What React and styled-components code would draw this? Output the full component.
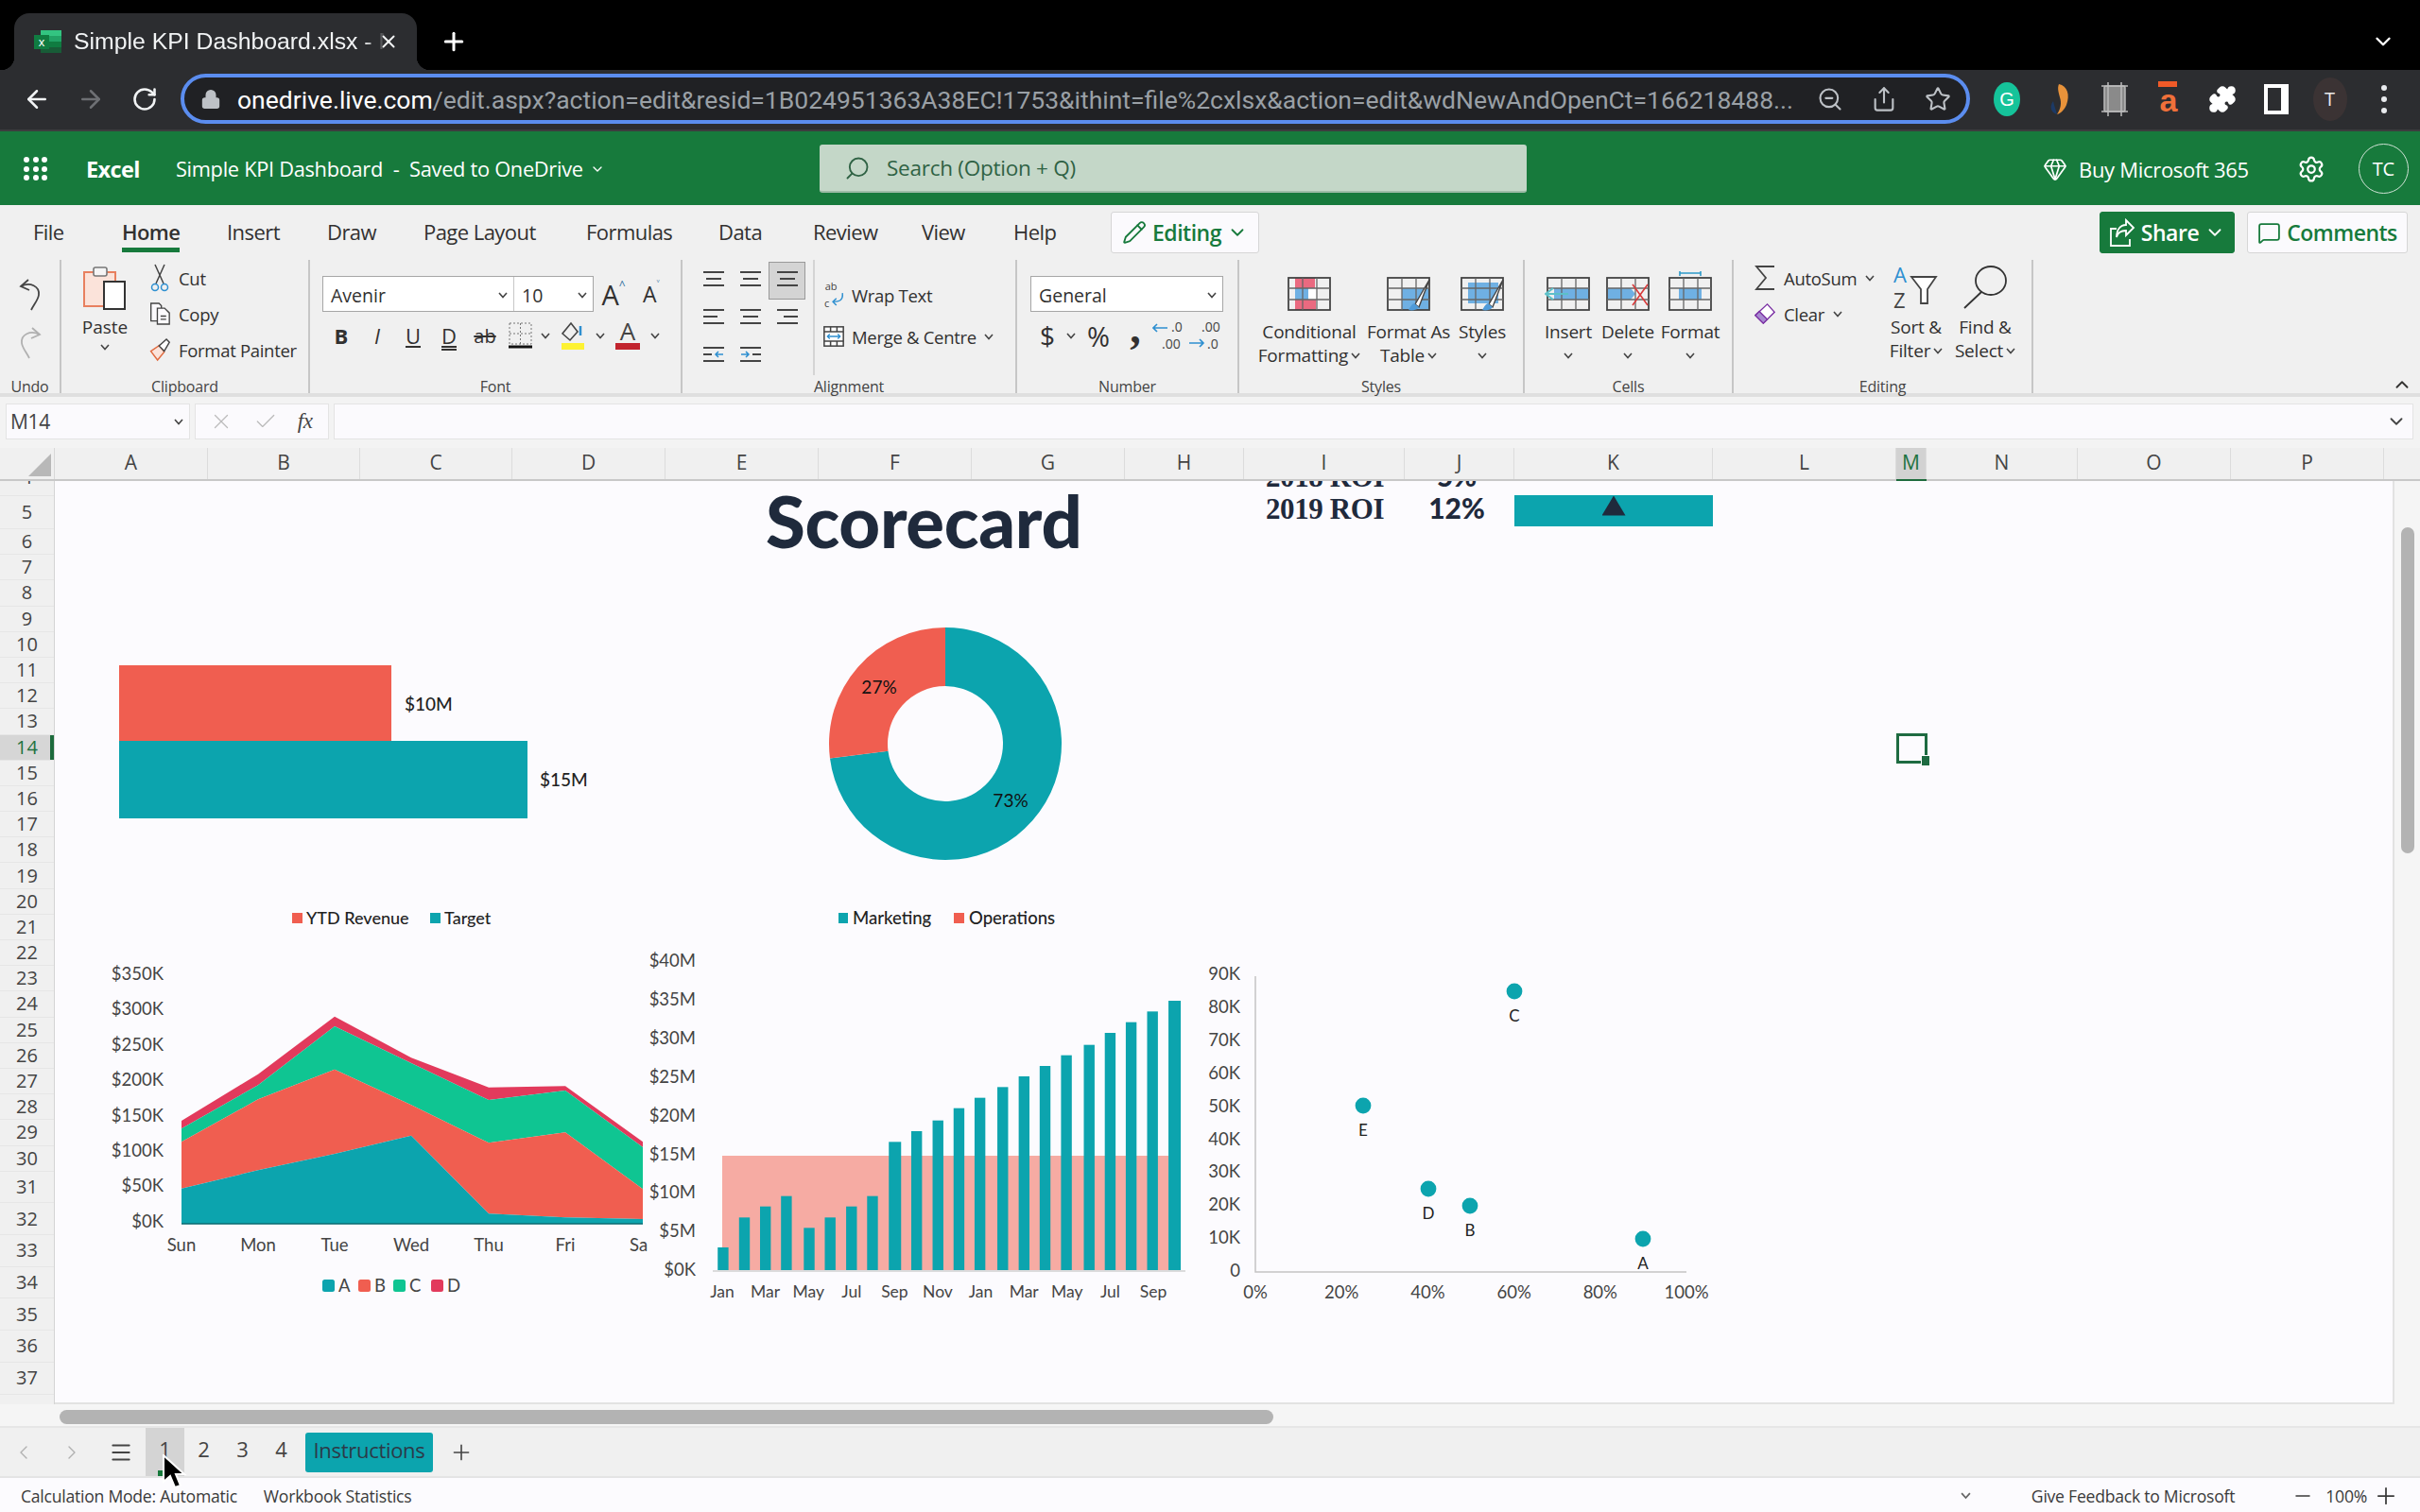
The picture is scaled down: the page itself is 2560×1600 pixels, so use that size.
import React from 'react';
import styled, { createGlobalStyle } from 'styled-components';
import { ArrowLeft, ArrowRight, RotateCw, Lock, Plus, X, ChevronDown, ChevronUp, ChevronLeft, ChevronRight, Search, ZoomOut, Share, Star, Puzzle, Gem, Settings, Pencil, Menu, Minus, MessageSquare, Check } from 'lucide-react';

const TEAL = '#0ca4ae';
const CORAL = '#f05e50';
const GREEN = '#177a3c';
const UI_FONT = '"Open Sans", "Noto Sans", sans-serif';
const CHART_FONT = 'Lato, "Open Sans", sans-serif';

const GlobalStyle = createGlobalStyle`
    html, body { margin: 0; padding: 0; background: #f0f0f0; }
    * { box-sizing: border-box; }
`;

const Page = styled.div`
    position: relative;
    width: 2560px;
    height: 1600px;
    overflow: hidden;
    display: flex;
    flex-direction: column;
    font-family: ${UI_FONT};
    color: #323130;
`;

/* browser chrome */
const TabStrip = styled.div`
    height: 74px;
    background: #000;
    display: flex;
    align-items: flex-end;
    padding-left: 15px;
`;
const BrowserTab = styled.div`
    position: relative;
    width: 426px;
    height: 60px;
    background: #2c2d30;
    border-radius: 16px 16px 0 0;
    display: flex;
    align-items: center;
    padding: 0 0 0 21px;
    color: #f1f3f4;
    &::before, &::after {
        content: '';
        position: absolute;
        bottom: 0;
        width: 14px;
        height: 14px;
    }
    &::before { left: -14px; background: radial-gradient(circle at 0 0, #000 14px, #2c2d30 14.5px); }
    &::after { right: -14px; background: radial-gradient(circle at 100% 0, #000 14px, #2c2d30 14.5px); }
`;
const TabTitle = styled.span`
    font-family: "Liberation Sans", sans-serif;
    font-size: 24.8px;
    width: 334px;
    margin-left: 13px;
    white-space: nowrap;
    overflow: hidden;
    -webkit-mask-image: linear-gradient(90deg, #000 92%, transparent 99%);
`;
const TabClose = styled(X)`
    margin-left: -12px;
    color: #f1f3f4;
`;
const NewTab = styled(Plus)`
    color: #fff;
    margin: 0 0 15px 24px;
`;
const TabListChevron = styled(ChevronDown)`
    color: #fff;
    margin: 0 26px 17px auto;
`;
const Toolbar = styled.div`
    height: 65px;
    background: #2c2d30;
    display: flex;
    align-items: center;
    padding: 0 0 2px 10px;
    border-bottom: 2px solid #3c3c3e;
`;
const NavButton = styled.div`
    width: 57px;
    display: flex;
    justify-content: center;
    color: ${p => (p.$off ? '#6e7074' : '#f1f3f4')};
`;
const UrlBar = styled.div`
    width: 1893px;
    height: 53px;
    margin: 0 10px;
    border: 4px solid #5b8def;
    border-radius: 27px;
    background: #202124;
    display: flex;
    align-items: center;
    padding: 0 2px 0 17px;
    color: #bdc1c6;
`;
const UrlText = styled.div`
    font-family: Roboto, "Liberation Sans", sans-serif;
    font-size: 26.5px;
    color: #9aa0a6;
    margin-left: 17px;
    flex: none;
    width: 1656px;
    padding-top: 2px;
    white-space: nowrap;
    overflow: hidden;
    b { color: #fff; font-weight: 400; }
`;
const UrlAction = styled.div`
    width: 57px;
    flex: none;
    display: flex;
    justify-content: center;
`;
const ExtButton = styled.div`
    width: 57px;
    height: 50px;
    display: flex;
    align-items: center;
    justify-content: center;
    color: #fff;
`;
const Avatar = styled.div`
    width: 36px;
    height: 46px;
    border-radius: 50%;
    background: #3b3334;
    color: #e8e8e8;
    font-size: 20px;
    display: flex;
    align-items: center;
    justify-content: center;
`;

/* excel title bar */
const AppBar = styled.div`
    height: 78px;
    background: ${GREEN};
    display: grid;
    grid-template-columns: 867px 748px 1fr;
    align-items: center;
    color: #fff;
`;
const AppLeft = styled.div`
    display: flex;
    align-items: center;
    padding: 1px 0 0 25px;
`;
const Waffle = styled.div`
    display: grid;
    grid-template-columns: repeat(3, 6px);
    gap: 3.5px;
    i { width: 6px; height: 6px; border-radius: 50%; background: #fff; }
`;
const AppName = styled.span`
    font-size: 23.5px;
    font-weight: 700;
    margin-left: 41px;
    letter-spacing: -0.6px;
`;
const DocName = styled.span`
    font-size: 21.8px;
    margin-left: 38px;
    display: flex;
    align-items: center;
    gap: 2px;
    white-space: pre;
    letter-spacing: -0.3px;
`;
const SearchBox = styled.div`
    height: 51px;
    background: #c4d7c8;
    border-radius: 3px;
    border-bottom: 2px solid #9dbba6;
    display: flex;
    align-items: center;
    padding: 1px 0 0 26px;
    gap: 17px;
    font-size: 22.5px;
    color: #2f6244;
    letter-spacing: -0.25px;
`;
const AppRight = styled.div`
    display: flex;
    align-items: center;
    padding: 1px 0 0 546px;
    font-size: 22px;
    white-space: nowrap;
    letter-spacing: -0.3px;
`;
const BuyText = styled.span`
    margin-left: 12px;
`;
const GearIcon = styled(Settings)`
    margin-left: 51px;
`;
const UserCircle = styled.div`
    width: 53px;
    height: 53px;
    margin-left: 35px;
    border: 1.5px solid #d0e3d6;
    border-radius: 50%;
    display: flex;
    align-items: center;
    justify-content: center;
    font-size: 20px;
`;

/* ribbon */
const Ribbon = styled.div`
    height: 203px;
    background: #f0f0f0;
    border-bottom: 4px solid #dfdfdf;
`;
const RibbonTabs = styled.div`
    height: 58px;
    display: flex;
    align-items: flex-start;
    gap: 50px;
    padding: 0 13px 0 35px;
`;
const RibbonTab = styled.div`
    width: ${p => p.$w}px;
    height: 50px;
    padding-top: 13px;
    line-height: 30px;
    font-size: 22px;
    letter-spacing: -0.55px;
    white-space: nowrap;
    font-weight: ${p => (p.$active ? 600 : 400)};
    border-bottom: 5px solid ${p => (p.$active ? GREEN : 'transparent')};
`;
const ModeButton = styled.div`
    height: 44px;
    margin-top: 7px;
    margin-left: ${p => p.$left || 0}px;
    width: ${p => p.$w}px;
    border-radius: 3px;
    border: 1.5px solid ${p => (p.$primary ? GREEN : '#d6d6d6')};
    background: ${p => (p.$primary ? GREEN : '#fbfafd')};
    color: ${p => (p.$primary ? '#fff' : GREEN)};
    display: flex;
    align-items: center;
    justify-content: center;
    gap: 6px;
    font-size: 23px;
    font-weight: 600;
    letter-spacing: -0.5px;
`;
const RibbonBody = styled.div`
    display: flex;
    height: 141px;
`;
const Group = styled.section`
    width: ${p => p.$w}px;
    border-right: 2px solid #c6c6c6;
    display: flex;
    flex-direction: column;
`;
const GroupBody = styled.div`
    flex: 1;
    display: flex;
    padding-left: ${p => p.$pad || 0}px;
    min-height: 0;
`;
const GroupLabel = styled.div`
    height: 20px;
    line-height: 20px;
    margin-bottom: -3px;
    text-align: center;
    font-size: 16px;
    letter-spacing: -0.2px;
    color: #444;
`;
const UndoStack = styled.div`
    width: 100%;
    display: flex;
    flex-direction: column;
    align-items: center;
    gap: 15px;
    padding-top: 19px;
`;
const PasteButton = styled.div`
    width: 52px;
    display: flex;
    flex-direction: column;
    align-items: center;
    padding-top: 5px;
    font-size: 19px;
    gap: 5px;
`;
const SmallColumn = styled.div`
    margin-left: ${p => p.$left || 0}px;
    padding-top: ${p => p.$top || 0}px;
    width: ${p => p.$w || 'auto'};
    display: flex;
    flex-direction: column;
`;
const SmallButton = styled.div`
    height: ${p => p.$h || 38}px;
    display: flex;
    align-items: center;
    gap: ${p => p.$gap || 9}px;
    font-size: 18.5px;
    letter-spacing: -0.3px;
    white-space: nowrap;
`;
const IconSlot = styled.span`
    width: 22px;
    display: flex;
    justify-content: center;
`;
const FontColumn = styled.div`
    padding-top: 17px;
`;
const Combo = styled.div`
    height: 38px;
    width: ${p => p.$w}px;
    background: #fff;
    border: 1.5px solid #a6a6a6;
    display: flex;
    align-items: center;
`;
const ComboPart = styled.div`
    height: 100%;
    flex: ${p => (p.$fixed ? `0 0 ${p.$fixed}px` : 1)};
    display: flex;
    align-items: center;
    justify-content: space-between;
    padding: 2px 6px 0 8px;
    font-size: 19.5px;
    ${p => p.$divider && 'border-right: 1.5px solid #c8c8c8;'}
`;
const Row = styled.div`
    display: flex;
    align-items: center;
    margin-top: ${p => p.$top || 0}px;
    margin-left: ${p => p.$left || 0}px;
`;
const ToolGlyph = styled.div`
    width: ${p => p.$w || 38}px;
    height: 36px;
    display: flex;
    align-items: center;
    justify-content: center;
    font-size: ${p => p.$size || 22}px;
    font-weight: ${p => p.$weight || 400};
    font-style: ${p => (p.$italic ? 'italic' : 'normal')};
    text-decoration: ${p => p.$line || 'none'};
    sup { font-size: 12px; align-self: flex-start; color: #2e6f9e; }
`;
const CommaGlyph = styled(ToolGlyph)`
    font-family: "Liberation Serif", serif;
    padding-bottom: 16px;
`;
const AlignGrid = styled.div`
    display: grid;
    grid-template-columns: repeat(3, 39px);
    grid-auto-rows: 40px;
    padding-top: 2px;
`;
const AlignCell = styled.div`
    display: flex;
    align-items: center;
    justify-content: center;
    ${p => p.$on && 'background: #d4d4d4; border: 1.5px solid #999;'}
`;
const InnerDivider = styled.div`
    width: 2px;
    height: 122px;
    background: #d4d4d4;
    margin: 0 9px 0 8px;
`;
const LargeButton = styled.div`
    width: ${p => p.$w}px;
    display: flex;
    flex-direction: column;
    align-items: center;
    padding-top: ${p => p.$top ?? 14}px;
`;
const LargeIcon = styled.div`
    height: ${p => p.$h || 38}px;
    display: flex;
    align-items: center;
    justify-content: center;
`;
const LargeText = styled.div`
    margin-top: ${p => p.$gap ?? 12}px;
    font-size: 19px;
    line-height: 25px;
    text-align: center;
    letter-spacing: -0.2px;
    white-space: nowrap;
    div { display: flex; align-items: center; justify-content: center; gap: 3px; min-height: 25px; }
`;
const CollapseRibbon = styled(ChevronUp)`
    align-self: flex-end;
    margin: 0 8px -2px auto;
`;

/* formula bar */
const FormulaBar = styled.div`
    height: 54px;
    background: #f3f3f3;
    display: flex;
    gap: 5px;
    padding: 7px 7px 0 6px;
`;
const FormulaBox = styled.div`
    height: 38px;
    background: #fbfafd;
    border: 1px solid #e4e4e4;
    width: ${p => (p.$w ? `${p.$w}px` : 'auto')};
    flex: ${p => (p.$w ? 'none' : 1)};
    display: flex;
    align-items: center;
    justify-content: ${p => p.$justify || 'space-between'};
    padding: 0 6px 0 4px;
    font-size: 21px;
    letter-spacing: -0.3px;
    color: #444;
`;
const FxLabel = styled.span`
    font-family: "Liberation Serif", serif;
    font-style: italic;
    font-size: 23px;
`;

/* headers */
const ColumnBar = styled.div`
    height: 35px;
    display: flex;
    background: #f0f0f0;
    border-bottom: 2px solid #c8c8c8;
    padding-right: 27px;
`;
const Corner = styled.div`
    width: 58px;
    flex: none;
    position: relative;
    border-right: 1px solid #d8d8d8;
    &::after {
        content: '';
        position: absolute;
        left: 30px;
        top: 6px;
        width: 24px;
        height: 24px;
        background: #b8b8b8;
        clip-path: polygon(100% 0, 100% 100%, 0 100%);
    }
`;
const ColumnCell = styled.div`
    width: ${p => p.$w}px;
    flex: none;
    display: flex;
    align-items: center;
    justify-content: center;
    padding-bottom: 3px;
    font-size: 21px;
    color: ${p => (p.$on ? '#1d7240' : '#444')};
    background: ${p => (p.$on ? '#d2d2d2' : 'transparent')};
    border-right: 1px solid #dcdcdc;
    box-shadow: ${p => (p.$on ? '0 4px 0 #1d6b3c' : 'none')};
    position: relative;
`;

const SheetArea = styled.div`
    height: 977px;
    display: flex;
    background: #f5f5f5;
`;
const RowRail = styled.div`
    width: 58px;
    flex: none;
    background: #f0f0f0;
    border-right: 1px solid #d4d4d4;
    overflow: hidden;
`;
const RowCell = styled.div`
    height: ${p => p.$h}px;
    display: flex;
    align-items: ${p => (p.$cut ? 'flex-end' : 'center')};
    justify-content: center;
    font-size: 20px;
    line-height: 20px;
    color: #444;
    border-bottom: 1px solid #e6e6e6;
    overflow: hidden;
    ${p => p.$cut && 'padding-bottom: 9px;'}
    ${p => p.$on && `
        background: #d6d6d6;
        color: #1d7240;
        box-shadow: inset -4px 0 0 #1d6b3c;
    `}
`;
const Canvas = styled.div`
    position: relative;
    width: 2475px;
    flex: none;
    background: #fcfbfe;
    border-right: 2px solid #e2e2e2;
    border-bottom: 2px solid #e2e2e2;
    overflow: hidden;
`;
const VScroll = styled.div`
    flex: 1;
    padding: 49px 6px 0 7px;
`;
const VThumb = styled.div`
    height: 345px;
    background: #b3b3b3;
    border-radius: 7px;
`;
const Placed = styled.div`
    position: absolute;
    left: ${p => p.$x - 58}px;
    top: ${p => p.$y - 509}px;
`;
const Scorecard = styled(Placed)`
    font-family: ${CHART_FONT};
    font-weight: 900;
    font-size: 76px;
    line-height: 80px;
    color: #1f2a3c;
    letter-spacing: -0.3px;
`;
const RoiTable = styled(Placed)`
    display: grid;
    grid-template-columns: 147px 116px 210px;
    grid-auto-rows: 34px;
    align-items: center;
    color: #1f2a3c;
`;
const RoiName = styled.div`
    font-family: "Liberation Serif", serif;
    font-weight: 700;
    font-size: 31px;
    white-space: nowrap;
    letter-spacing: -0.4px;
    padding-bottom: 2px;
`;
const RoiValue = styled.div`
    font-family: ${CHART_FONT};
    font-weight: 900;
    font-size: 30px;
    text-align: center;
    padding: 0 6px 6px 0;
`;
const RoiBar = styled.div`
    height: 33px;
    background: ${p => p.$fill || 'transparent'};
    display: flex;
    justify-content: center;
    padding-top: 1px;
`;
const Triangle = styled.div`
    width: 25px;
    height: 21px;
    background: #1f2a3c;
    clip-path: polygon(50% 0, 100% 100%, 0 100%);
`;
const ActiveCell = styled(Placed)`
    width: 33px;
    height: 32px;
    border: 3px solid #1e6b41;
    &::after {
        content: '';
        position: absolute;
        right: -6px;
        bottom: -6px;
        width: 8px;
        height: 10px;
        background: #1e6b41;
        border: 1px solid #fff;
    }
`;
const ChartSvg = styled.svg`
    position: absolute;
    left: ${p => p.$x - 58}px;
    top: ${p => p.$y - 509}px;
    overflow: hidden;
`;
const ChartText = styled.text`
    font-family: ${CHART_FONT};
    font-size: ${p => p.$size || 18.5}px;
    font-weight: ${p => p.$weight || 400};
    fill: ${p => p.$fill || '#444'};
    text-anchor: ${p => p.$anchor || 'middle'};
    dominant-baseline: central;
`;

/* bottom bars */
const HScroll = styled.div`
    height: 25px;
    background: #f5f5f5;
    padding: 6px 0 0 63px;
    border-bottom: 2px solid #e6e6e6;
`;
const HThumb = styled.div`
    width: 1284px;
    height: 15px;
    background: #b3b3b3;
    border-radius: 8px;
`;
const SheetBar = styled.div`
    height: 53px;
    background: #f0f0f0;
    display: flex;
    align-items: stretch;
    border-bottom: 2px solid #e4e4e4;
`;
const SheetNav = styled.div`
    width: ${p => p.$w}px;
    display: flex;
    align-items: center;
    justify-content: center;
    color: ${p => p.$color || '#b0b0b0'};
`;
const SheetTab = styled.div`
    width: 41px;
    display: flex;
    align-items: center;
    justify-content: center;
    padding-bottom: 8px;
    font-size: 22px;
    color: #444;
    background: ${p => (p.$on ? '#d4d4d4' : 'transparent')};
    position: relative;
    ${p => p.$on && `
        &::after {
            content: '';
            position: absolute;
            left: 13px;
            bottom: 0;
            width: 7px;
            height: 6px;
            background: ${GREEN};
        }
    `}
`;
const ColorTab = styled.div`
    align-self: center;
    margin: 0 0 0 5px;
    width: 135px;
    height: 42px;
    background: ${TEAL};
    border-radius: 3px;
    display: flex;
    align-items: center;
    justify-content: center;
    padding-bottom: 5px;
    font-size: 22px;
    letter-spacing: -0.3px;
    color: #2b3a48;
`;
const StatusBar = styled.div`
    height: 36px;
    background: #fcfbfe;
    display: flex;
    align-items: center;
    padding: 2px 22px 0;
    font-size: 17.6px;
    letter-spacing: -0.25px;
    color: #3a3a3a;
    white-space: nowrap;
`;
const StatusItem = styled.span`
    margin-left: ${p => (p.$auto ? 'auto' : `${p.$left || 0}px`)};
    display: inline-flex;
    align-items: center;
`;
const Pointer = styled.svg`
    position: absolute;
    left: 170px;
    top: 1539px;
`;

const Caret = ({ size = 10, color = '#444' }) => (
    <svg width={size} height={size * 0.7} viewBox="0 0 10 7" fill="none" stroke={color} strokeWidth="1.6"><path d="M1 1l4 4.5L9 1" /></svg>
);

const Lines = ({ rows, w = 24, gap = 7, dark = '#444', extra }) => (
    <svg width={w} height={rows.length * gap + 2} fill="none" stroke={dark} strokeWidth="2">
        {rows.map((r, i) => <path key={i} d={`M${r[0]} ${i * gap + 2}H${r[1]}`} />)}
        {extra}
    </svg>
);

const ExcelFavicon = () => (
    <svg width="29" height="24" viewBox="0 0 29 24">
        <rect x="7" y="0" width="22" height="6" fill="#33c481" />
        <rect x="7" y="6" width="22" height="6" fill="#21a366" />
        <rect x="7" y="12" width="22" height="6" fill="#107c41" />
        <rect x="7" y="18" width="22" height="6" fill="#185c37" />
        <rect x="0" y="5" width="16" height="15" fill="#107c41" />
        <text x="8" y="17" fontSize="13" textAnchor="middle" fill="#fff" fontFamily="Liberation Sans">x</text>
    </svg>
);

const GrammarlyIcon = () => (
    <svg width="28" height="36" viewBox="0 0 28 36">
        <ellipse cx="14" cy="18" rx="14" ry="18" fill="#15c39a" />
        <text x="14" y="25" fontSize="20" textAnchor="middle" fill="#fff" fontFamily="Liberation Sans">G</text>
    </svg>
);
const SwooshIcon = () => (
    <svg width="28" height="34" viewBox="0 0 28 34">
        <path d="M12 1c9 2 12 11 8 22-2 5-6 9-10 10 4-6 5-12 3-18-1-5-3-9-1-14z" fill="#e8923a" />
        <path d="M10 33C3 31 2 24 6 19c1 5 3 10 4 14z" fill="#1c3a66" />
    </svg>
);
const CaptureIcon = () => (
    <svg width="30" height="38" viewBox="0 0 30 38" fill="none" stroke="#bbb" strokeWidth="1.5">
        <rect x="4" y="5" width="22" height="27" rx="2" fill="#8a8a8a" />
        <path d="M1 5h28M1 32h28M8 1v36M22 1v36" />
    </svg>
);
const AmazonIcon = () => (
    <svg width="24" height="38" viewBox="0 0 24 38">
        <rect x="1" y="0" width="20" height="6" fill="#f05a28" />
        <text x="12" y="32" fontSize="34" textAnchor="middle" fontWeight="700" fill="#f0703a" fontFamily="Liberation Sans">a</text>
    </svg>
);
const PanelIcon = () => (
    <svg width="26" height="32" viewBox="0 0 26 32"><rect width="26" height="32" fill="#fff" /><rect x="4" y="4" width="14" height="24" fill="#2c2d30" /></svg>
);
const DotsIcon = () => (
    <svg width="6" height="30" viewBox="0 0 6 30" fill="#e8eaed"><circle cx="3" cy="3" r="3" /><circle cx="3" cy="15" r="3" /><circle cx="3" cy="27" r="3" /></svg>
);
const ShareArrowIcon = () => (
    <svg width="28" height="30" viewBox="0 0 28 30" fill="none" stroke="#fff" strokeWidth="1.8">
        <path d="M8 11H2v18h20v-7" /><path d="M18 2l8 8-8 8v-5c-6 0-9 3-10 7 0-8 4-13 10-13z" />
    </svg>
);

const UndoIcon = ({ color = '#444', flip }) => (
    <svg width="24" height="36" viewBox="0 0 24 36" fill="none" stroke={color} strokeWidth="1.8" style={flip ? { transform: 'scaleX(-1)' } : undefined}>
        <path d="M10 2L2 9l9 4" /><path d="M2 9c10-5 20 0 19 9-.5 5-5 10-8 16" />
    </svg>
);
const PasteIcon = () => (
    <svg width="46" height="48" viewBox="0 0 46 48" fill="none">
        <rect x="1" y="8" width="33" height="36" fill="#fbe3da" stroke="#e8805f" strokeWidth="2" />
        <rect x="11" y="3" width="14" height="9" rx="2" fill="#f5f5f5" stroke="#777" strokeWidth="1.6" />
        <rect x="22" y="18" width="22" height="29" fill="#fff" stroke="#333" strokeWidth="2" />
    </svg>
);
const CutIcon = () => (
    <svg width="20" height="30" viewBox="0 0 20 30" fill="none" strokeWidth="1.5">
        <path d="M5 1l9 20M15 1L6 21" stroke="#444" />
        <circle cx="5" cy="25" r="3.5" stroke="#2e8fd0" /><circle cx="15" cy="25" r="3.5" stroke="#2e8fd0" />
    </svg>
);
const CopyIcon = () => (
    <svg width="26" height="28" viewBox="0 0 26 28" fill="#fbfafd" stroke="#444" strokeWidth="1.6">
        <path d="M2 1h10l3 3v19H2z" />
        <path d="M10 7h9l6 6v14H10z" /><path d="M14 17h7M14 21h7" />
    </svg>
);
const BrushIcon = () => (
    <svg width="28" height="30" viewBox="0 0 28 30" fill="none" strokeWidth="1.8">
        <path d="M2 17L14 9l6 9-9 11z" fill="#fbe3da" stroke="#e06a3f" />
        <path d="M13 10l10-9 4 4-7 12z" fill="#fff" stroke="#444" />
    </svg>
);
const BordersIcon = () => (
    <svg width="26" height="28" viewBox="0 0 26 28" fill="none">
        <rect x="1" y="1" width="23" height="22" stroke="#777" strokeDasharray="2 2" />
        <path d="M12.5 1v22M1 12h23" stroke="#777" strokeDasharray="2 2" />
        <path d="M0 26h25" stroke="#111" strokeWidth="3" />
    </svg>
);
const FillIcon = () => (
    <svg width="26" height="30" viewBox="0 0 26 30" fill="none">
        <path d="M11 2L2 13l8 7 8-9z" stroke="#444" strokeWidth="1.6" />
        <path d="M21 5v10" stroke="#2e8fd0" strokeWidth="2.5" />
        <rect x="1" y="23" width="24" height="7" fill="#fdf232" />
    </svg>
);
const FontColorIcon = () => (
    <svg width="28" height="30" viewBox="0 0 28 30">
        <text x="14" y="20" fontSize="26" textAnchor="middle" fill="#444" fontFamily="Open Sans">A</text>
        <rect x="1" y="23" width="26" height="7" fill="#c2242e" />
    </svg>
);
const WrapIcon = () => (
    <svg width="24" height="32" viewBox="0 0 24 32">
        <text x="2" y="10" fontSize="12" fill="#444" fontFamily="Open Sans">ab</text>
        <text x="1" y="30" fontSize="12" fill="#444" fontFamily="Open Sans">c</text>
        <path d="M22 14c1 8-3 10-11 10M15 20l-4 4 4 4" fill="none" stroke="#2e8fd0" strokeWidth="1.6" />
    </svg>
);
const MergeIcon = () => (
    <svg width="26" height="26" viewBox="0 0 26 26" fill="none" stroke="#444" strokeWidth="1.8">
        <rect x="1" y="1" width="24" height="24" fill="#fff" /><path d="M1 7h24M1 19h24M9 1v6M17 1v6M9 19v6M17 19v6" />
        <path d="M5 13h16M8 10l-3 3 3 3M18 10l3 3-3 3" stroke="#2e8fd0" strokeWidth="1.5" />
    </svg>
);
const DecimalIcon = ({ more }) => (
    <svg width="36" height="32" viewBox="0 0 36 32" fontFamily="Open Sans" fontSize="14" fill="#444">
        {more ? (
            <g>
                <text x="14" y="12">.00</text><text x="20" y="30">.0</text>
                <path d="M1 24h15M12 20l4 4-4 4" fill="none" stroke="#2e8fd0" strokeWidth="1.6" />
            </g>
        ) : (
            <g>
                <text x="20" y="12">.0</text><text x="10" y="30">.00</text>
                <path d="M1 8h15M5 4L1 8l4 4" fill="none" stroke="#2e8fd0" strokeWidth="1.6" />
            </g>
        )}
    </svg>
);

// shared 3x3 worksheet drawing behind the cell commands
const GridIcon = ({ children, top }) => (
    <svg width="50" height="44" viewBox="0 0 50 44" fill="none">
        {children}
        <rect x="3" y="8" width="44" height="34" stroke="#444" strokeWidth="1.8" />
        <path d="M3 19h44M3 31h44M18 8v34M33 8v34" stroke="#666" strokeWidth="1.3" />
        {top}
    </svg>
);
const Bristles = () => (
    <g>
        <path d="M47 10L32 36l4 3z" fill="#fff" stroke="#444" strokeWidth="1.4" />
        <path d="M31 35c-3 1-4 4-6 7 4 1 9 0 11-3z" fill="#4f9bd9" />
    </g>
);
const ConditionalIcon = () => (
    <GridIcon>
        <path d="M10 8h21v11H24v12h8v11H10z" fill="#ea6a80" />
        <rect x="10" y="19" width="14" height="12" fill="#6fb0e3" />
        <rect x="24" y="19" width="9" height="12" fill="#fff" />
    </GridIcon>
);
const TableStyleIcon = () => <GridIcon top={<Bristles />}><path d="M18 19h29v23H18z" fill="#6fb0e3" /></GridIcon>;
const CellStyleIcon = () => <GridIcon top={<Bristles />}><path d="M10 13h32v22H10z" fill="#6fb0e3" /></GridIcon>;
const InsertCellIcon = () => (
    <GridIcon top={<path d="M1 25h24M9 19l-8 6 8 6" stroke="#5cc0c8" strokeWidth="2" />}><rect x="10" y="19" width="37" height="12" fill="#6fb0e3" /></GridIcon>
);
const DeleteCellIcon = () => (
    <GridIcon top={<path d="M30 15l16 22M46 15L30 37" stroke="#d83a3a" strokeWidth="1.6" />}><path d="M4 19h24l5 6-5 6H4z" fill="#6fb0e3" /></GridIcon>
);
const FormatCellIcon = () => (
    <GridIcon top={<path d="M14 1v5M36 1v5M14 3h22" stroke="#2e9ac9" strokeWidth="1.6" />}><rect x="13" y="19" width="24" height="12" fill="#6fb0e3" /></GridIcon>
);
const SigmaIcon = () => (
    <svg width="22" height="26" viewBox="0 0 22 26" fill="none" stroke="#444" strokeWidth="1.8"><path d="M21 1H2l10 12L2 25h19" /></svg>
);
const EraserIcon = () => (
    <svg width="26" height="26" viewBox="0 0 26 26" fill="none" stroke="#7a2fa3" strokeWidth="1.6">
        <path d="M16 1l9 10-14 14L1 15z" fill="#fff" /><path d="M6 10l10 10-5 5L1 15z" fill="#a88ad0" />
    </svg>
);
const SortIcon = () => (
    <svg width="50" height="46" viewBox="0 0 50 46" fontFamily="Open Sans" fontSize="22">
        <text x="1" y="18" fill="#2e8fd0">A</text><text x="1" y="45" fill="#444">Z</text>
        <path d="M20 12h26l-9 13v15h-7V25z" fill="#fff" stroke="#444" strokeWidth="1.8" />
    </svg>
);
const FindIcon = () => (
    <svg width="48" height="46" viewBox="0 0 48 46" fill="none" stroke="#333" strokeWidth="1.8">
        <ellipse cx="30" cy="16" rx="16" ry="15" /><path d="M20 28L2 45" />
    </svg>
);

const RIBBON_TABS = [['File', 44], ['Home', 61], ['Insert', 56], ['Draw', 52], ['Page Layout', 122], ['Formulas', 90], ['Data', 50], ['Review', 65], ['View', 47], ['Help', 46]];

const AXIS_COLUMNS = [['A', 162], ['B', 161], ['C', 161], ['D', 162], ['E', 162], ['F', 162], ['G', 162], ['H', 126], ['I', 170], ['J', 116], ['K', 210], ['L', 194], ['M', 32], ['N', 160], ['O', 162], ['P', 162]];

const rowList = [{ n: 4, h: 15.5, cut: true }, { n: 5, h: 35.5 }];
for (let n = 6; n <= 30; n++) rowList.push({ n, h: 27.2 });
for (let n = 31; n <= 37; n++) rowList.push({ n, h: 33.7 });

const ALIGN_ICONS = [
    [[1, 23], [4, 20], [1, 23]],
    [[1, 23], [4, 20], [1, 23]],
    [[1, 23], [4, 20], [1, 23]],
    [[1, 23], [1, 16], [1, 23]],
    [[1, 23], [4, 20], [1, 23]],
    [[1, 23], [8, 23], [1, 23]],
];

// stacked area data, y values in page pixels
const AREA_X = [192, 273, 354, 435, 517, 598, 680];
const areaY = vals => vals.map(v => 960 + v / 3);
const AREA_SERIES = [
    { fill: '#e23a5c', top: areaY([678, 530, 347, 478, 572, 568, 745]), bottom: areaY([703, 565, 378, 495, 612, 582, 762]) },
    { fill: '#0fc592', top: areaY([703, 565, 378, 495, 612, 582, 762]), bottom: areaY([745, 610, 515, 628, 748, 715, 895]) },
    { fill: CORAL, top: areaY([745, 610, 515, 628, 748, 715, 895]), bottom: areaY([893, 835, 783, 725, 973, 985, 990]) },
    { fill: TEAL, top: areaY([893, 835, 783, 725, 973, 985, 990]), bottom: [1295, 1295, 1295, 1295, 1295, 1295, 1295] },
];
const areaPath = s => {
    const up = s.top.map((y, i) => `${AREA_X[i]} ${y}`).join('L');
    const down = s.bottom.map((y, i) => `${AREA_X[i]} ${y}`).reverse().join('L');
    return `M${up}L${down}Z`;
};

const BAR_EDGES = [207, 266, 324, 382, 445, 503, 562, 620, 680, 742, 801, 859, 917, 980, 1039, 1097, 1156, 1219, 1277, 1335, 1394, 1453];
const BAR_TOPS = [1020, 925, 890, 857, 958, 925, 890, 857, 685, 651, 617, 578, 545, 511, 477, 444, 410, 377, 339, 305, 271, 237];

const SCATTER = [['C', 1602, 1049], ['E', 1442, 1170], ['D', 1511, 1258], ['B', 1555, 1276], ['A', 1738, 1311]];

const donutArc = (a0, a1, R, r, cx, cy) => {
    const p = (a, rad) => [cx + rad * Math.sin(a), cy - rad * Math.cos(a)];
    const [x0, y0] = p(a0, R);
    const [x1, y1] = p(a1, R);
    const [x2, y2] = p(a1, r);
    const [x3, y3] = p(a0, r);
    const large = a1 - a0 > Math.PI ? 1 : 0;
    return `M${x0} ${y0}A${R} ${R} 0 ${large} 1 ${x1} ${y1}L${x2} ${y2}A${r} ${r} 0 ${large} 0 ${x3} ${y3}Z`;
};

function Charts() {
    return (
        <>
            <ChartSvg $x={110} $y={690} width={560} height={300} viewBox="110 690 560 300">
                <rect x="126" y="704" width="288" height="80" fill={CORAL} />
                <rect x="126" y="784" width="432" height="82" fill={TEAL} />
                <ChartText x="428" y="744" $anchor="start" $fill="#222" $weight={500} $size={19}>$10M</ChartText>
                <ChartText x="571" y="824" $anchor="start" $fill="#222" $weight={500} $size={19}>$15M</ChartText>
                <rect x="309" y="966" width="11" height="11" fill={CORAL} />
                <ChartText x="324" y="971" $anchor="start" $fill="#222" $weight={500} $size={18}>YTD Revenue</ChartText>
                <rect x="455" y="966" width="11" height="11" fill={TEAL} />
                <ChartText x="470" y="971" $anchor="start" $fill="#222" $weight={500} $size={18}>Target</ChartText>
            </ChartSvg>

            <ChartSvg $x={860} $y={650} width={280} height={340} viewBox="860 650 280 340">
                <path d={donutArc(0, 0.73 * 2 * Math.PI, 123, 61, 1000, 787)} fill={TEAL} />
                <path d={donutArc(0.73 * 2 * Math.PI, 2 * Math.PI, 123, 61, 1000, 787)} fill={CORAL} />
                <ChartText x="930" y="726" $fill="#111" $size={19}>27%</ChartText>
                <ChartText x="1069" y="846" $fill="#111" $size={19}>73%</ChartText>
                <rect x="887" y="966" width="10" height="11" fill={TEAL} />
                <ChartText x="902" y="971" $anchor="start" $fill="#222" $weight={500} $size={18.5}>Marketing</ChartText>
                <rect x="1009" y="966" width="11" height="11" fill={CORAL} />
                <ChartText x="1025" y="971" $anchor="start" $fill="#222" $weight={500} $size={18.5}>Operations</ChartText>
            </ChartSvg>

            <ChartSvg $x={100} $y={1010} width={590} height={370} viewBox="100 1010 590 370">
                {['$350K', '$300K', '$250K', '$200K', '$150K', '$100K', '$50K', '$0K'].map((t, i) => (
                    <ChartText key={t} x="173" y={1030 + i * 37.4} $anchor="end">{t}</ChartText>
                ))}
                {AREA_SERIES.map(s => <path key={s.fill} d={areaPath(s)} fill={s.fill} />)}
                <path d="M192 1295H680" stroke="#0a6a70" strokeWidth="1.5" />
                {['Sun', 'Mon', 'Tue', 'Wed', 'Thu', 'Fri'].map((t, i) => (
                    <ChartText key={t} x={AREA_X[i]} y="1317">{t}</ChartText>
                ))}
                <ChartText x="666" y="1317" $anchor="start">Sa</ChartText>
                {[['A', 341, TEAL], ['B', 379, CORAL], ['C', 416, '#0fc592'], ['D', 456, '#e23a5c']].map(([t, x, c]) => (
                    <g key={t}>
                        <rect x={x} y="1354" width="13" height="13" rx="2.5" fill={c} />
                        <ChartText x={x + 17} y="1360" $anchor="start">{t}</ChartText>
                    </g>
                ))}
            </ChartSvg>

            <ChartSvg $x={680} $y={1000} width={590} height={385} viewBox="680 1000 590 385">
                {['$40M', '$35M', '$30M', '$25M', '$20M', '$15M', '$10M', '$5M', '$0K'].map((t, i) => (
                    <ChartText key={t} x="736" y={1016 + i * 40.9} $anchor="end">{t}</ChartText>
                ))}
                <rect x="764" y="1223" width="472" height="121" fill="#f6aba3" />
                {BAR_EDGES.map((e, i) => (
                    <rect key={e} x={680 + e / 2.613} y={980 + BAR_TOPS[i] / 3} width={i === 8 || i === 21 ? 13 : 11.4} height={1344 - (980 + BAR_TOPS[i] / 3)} fill={TEAL} />
                ))}
                <path d="M754 1345H1254" stroke="#d0d0d0" strokeWidth="1.5" />
                {['Jan', 'Mar', 'May', 'Jul', 'Sep', 'Nov', 'Jan', 'Mar', 'May', 'Jul', 'Sep'].map((t, i) => (
                    <ChartText key={i} x={764 + i * 45.6} y="1366" $size={17.5}>{t}</ChartText>
                ))}
            </ChartSvg>

            <ChartSvg $x={1270} $y={1015} width={560} height={370} viewBox="1270 1015 560 370">
                {['90K', '80K', '70K', '60K', '50K', '40K', '30K', '20K', '10K', '0'].map((t, i) => (
                    <ChartText key={t} x="1312" y={1030 + i * 34.9} $anchor="end">{t}</ChartText>
                ))}
                <path d="M1328 1033V1346H1784" fill="none" stroke="#c4c4c4" strokeWidth="1.5" />
                {['0%', '20%', '40%', '60%', '80%', '100%'].map((t, i) => (
                    <ChartText key={t} x={1328 + i * 91.2} y="1367">{t}</ChartText>
                ))}
                {SCATTER.map(([t, x, y]) => (
                    <g key={t}>
                        <circle cx={x} cy={y} r="8.4" fill={TEAL} />
                        <ChartText x={x} y={y + 25} $size={17} $fill="#222">{t}</ChartText>
                    </g>
                ))}
            </ChartSvg>
        </>
    );
}

export default function App() {
    return (
        <Page>
            <GlobalStyle />
            <TabStrip>
                <BrowserTab>
                    <ExcelFavicon />
                    <TabTitle>Simple KPI Dashboard.xlsx - Microsoft Excel</TabTitle>
                    <TabClose size={22} strokeWidth={2.2} />
                </BrowserTab>
                <NewTab size={30} strokeWidth={2.4} />
                <TabListChevron size={26} strokeWidth={2.2} />
            </TabStrip>

            <Toolbar>
                <NavButton><ArrowLeft size={30} strokeWidth={2} /></NavButton>
                <NavButton $off><ArrowRight size={30} strokeWidth={2} /></NavButton>
                <NavButton><RotateCw size={28} strokeWidth={2.2} /></NavButton>
                <UrlBar>
                    <Lock size={22} fill="#bdc1c6" />
                    <UrlText><b>onedrive.live.com</b>/edit.aspx?action=edit&amp;resid=1B024951363A38EC!1753&amp;ithint=file%2cxlsx&amp;action=edit&amp;wdNewAndOpenCt=166218488...</UrlText>
                    <UrlAction><ZoomOut size={28} strokeWidth={1.8} /></UrlAction>
                    <UrlAction><Share size={28} strokeWidth={1.8} /></UrlAction>
                    <UrlAction><Star size={28} strokeWidth={1.8} /></UrlAction>
                </UrlBar>
                <ExtButton><GrammarlyIcon /></ExtButton>
                <ExtButton><SwooshIcon /></ExtButton>
                <ExtButton><CaptureIcon /></ExtButton>
                <ExtButton><AmazonIcon /></ExtButton>
                <ExtButton><Puzzle size={30} fill="#fff" /></ExtButton>
                <ExtButton><PanelIcon /></ExtButton>
                <ExtButton><Avatar>T</Avatar></ExtButton>
                <ExtButton><DotsIcon /></ExtButton>
            </Toolbar>

            <AppBar>
                <AppLeft>
                    <Waffle>{Array.from({ length: 9 }, (_, i) => <i key={i} />)}</Waffle>
                    <AppName>Excel</AppName>
                    <DocName>Simple KPI Dashboard  -  Saved to OneDrive <ChevronDown size={16} /></DocName>
                </AppLeft>
                <SearchBox>
                    <Search size={28} strokeWidth={1.6} style={{ transform: 'scaleX(-1)' }} />
                    Search (Option + Q)
                </SearchBox>
                <AppRight>
                    <Gem size={26} strokeWidth={1.6} />
                    <BuyText>Buy Microsoft 365</BuyText>
                    <GearIcon size={30} strokeWidth={1.8} />
                    <UserCircle>TC</UserCircle>
                </AppRight>
            </AppBar>

            <Ribbon>
                <RibbonTabs>
                    {RIBBON_TABS.map(([t, w]) => (
                        <RibbonTab key={t} $w={w} $active={t === 'Home'}>{t}</RibbonTab>
                    ))}
                    <ModeButton $w={157} $left={7}><Pencil size={26} strokeWidth={1.7} />Editing<ChevronDown size={22} /></ModeButton>
                    <ModeButton $w={143} $left={839} $primary><ShareArrowIcon />Share<ChevronDown size={22} /></ModeButton>
                    <ModeButton $w={170} $left={-37}><MessageSquare size={25} strokeWidth={1.7} />Comments</ModeButton>
                </RibbonTabs>

                <RibbonBody>
                    <Group $w={65}>
                        <GroupBody>
                            <UndoStack>
                                <UndoIcon />
                                <UndoIcon color="#b0b0b0" flip />
                            </UndoStack>
                        </GroupBody>
                        <GroupLabel>Undo</GroupLabel>
                    </Group>

                    <Group $w={263}>
                        <GroupBody $pad={20}>
                            <PasteButton>
                                <PasteIcon />
                                Paste
                                <Caret />
                            </PasteButton>
                            <SmallColumn $left={21}>
                                <SmallButton><IconSlot><CutIcon /></IconSlot>Cut</SmallButton>
                                <SmallButton><IconSlot><CopyIcon /></IconSlot>Copy</SmallButton>
                                <SmallButton><IconSlot><BrushIcon /></IconSlot>Format Painter</SmallButton>
                            </SmallColumn>
                        </GroupBody>
                        <GroupLabel>Clipboard</GroupLabel>
                    </Group>

                    <Group $w={394}>
                        <GroupBody $pad={13}>
                            <FontColumn>
                                <Row>
                                    <Combo $w={287}>
                                        <ComboPart $divider>Avenir<Caret /></ComboPart>
                                        <ComboPart $fixed={83}>10<Caret /></ComboPart>
                                    </Combo>
                                    <ToolGlyph $w={42} $size={29}>A<sup>^</sup></ToolGlyph>
                                    <ToolGlyph $w={38} $size={23}>A<sup>˅</sup></ToolGlyph>
                                </Row>
                                <Row $top={7} $left={1}>
                                    <ToolGlyph $weight={700}>B</ToolGlyph>
                                    <ToolGlyph $italic>I</ToolGlyph>
                                    <ToolGlyph $line="underline">U</ToolGlyph>
                                    <ToolGlyph $line="underline double">D</ToolGlyph>
                                    <ToolGlyph $line="line-through" $size={20}>ab</ToolGlyph>
                                    <ToolGlyph><BordersIcon /></ToolGlyph>
                                    <ToolGlyph $w={14}><Caret /></ToolGlyph>
                                    <ToolGlyph $w={44}><FillIcon /></ToolGlyph>
                                    <ToolGlyph $w={14}><Caret /></ToolGlyph>
                                    <ToolGlyph $w={44}><FontColorIcon /></ToolGlyph>
                                    <ToolGlyph $w={14}><Caret /></ToolGlyph>
                                </Row>
                            </FontColumn>
                        </GroupBody>
                        <GroupLabel>Font</GroupLabel>
                    </Group>

                    <Group $w={354}>
                        <GroupBody $pad={13}>
                            <AlignGrid>
                                {ALIGN_ICONS.map((rows, i) => (
                                    <AlignCell key={i} $on={i === 2}><Lines rows={rows} /></AlignCell>
                                ))}
                                <AlignCell><Lines rows={[[1, 23], [1, 10], [1, 23]]} extra={<path d="M22 9h-8M17 6l-3 3 3 3" stroke="#2e8fd0" strokeWidth="1.5" />} /></AlignCell>
                                <AlignCell><Lines rows={[[1, 23], [14, 23], [1, 23]]} extra={<path d="M2 9h8M7 6l3 3-3 3" stroke="#2e8fd0" strokeWidth="1.5" />} /></AlignCell>
                            </AlignGrid>
                            <InnerDivider />
                            <SmallColumn $top={15}>
                                <SmallButton $h={44} $gap={8}><IconSlot><WrapIcon /></IconSlot>Wrap Text</SmallButton>
                                <SmallButton $h={44} $gap={8}><IconSlot><MergeIcon /></IconSlot>Merge &amp; Centre<Caret /></SmallButton>
                            </SmallColumn>
                        </GroupBody>
                        <GroupLabel>Alignment</GroupLabel>
                    </Group>

                    <Group $w={235}>
                        <GroupBody $pad={14}>
                            <FontColumn>
                                <Combo $w={204}><ComboPart>General<Caret /></ComboPart></Combo>
                                <Row $top={7}>
                                    <ToolGlyph $w={36} $size={28}>$</ToolGlyph>
                                    <ToolGlyph $w={14}><Caret /></ToolGlyph>
                                    <ToolGlyph $w={44} $size={29}>%</ToolGlyph>
                                    <CommaGlyph $w={34} $size={46} $weight={700}>,</CommaGlyph>
                                    <ToolGlyph $w={38}><DecimalIcon /></ToolGlyph>
                                    <ToolGlyph $w={38}><DecimalIcon more /></ToolGlyph>
                                </Row>
                            </FontColumn>
                        </GroupBody>
                        <GroupLabel>Number</GroupLabel>
                    </Group>

                    <Group $w={302}>
                        <GroupBody $pad={19}>
                            <LargeButton $w={110}>
                                <LargeIcon><ConditionalIcon /></LargeIcon>
                                <LargeText><div>Conditional</div><div>Formatting<Caret /></div></LargeText>
                            </LargeButton>
                            <LargeButton $w={100}>
                                <LargeIcon><TableStyleIcon /></LargeIcon>
                                <LargeText><div>Format As</div><div>Table<Caret /></div></LargeText>
                            </LargeButton>
                            <LargeButton $w={56}>
                                <LargeIcon><CellStyleIcon /></LargeIcon>
                                <LargeText><div>Styles</div><div><Caret /></div></LargeText>
                            </LargeButton>
                        </GroupBody>
                        <GroupLabel>Styles</GroupLabel>
                    </Group>

                    <Group $w={221}>
                        <GroupBody $pad={15}>
                            <LargeButton $w={62}>
                                <LargeIcon><InsertCellIcon /></LargeIcon>
                                <LargeText><div>Insert</div><div><Caret /></div></LargeText>
                            </LargeButton>
                            <LargeButton $w={64}>
                                <LargeIcon><DeleteCellIcon /></LargeIcon>
                                <LargeText><div>Delete</div><div><Caret /></div></LargeText>
                            </LargeButton>
                            <LargeButton $w={68}>
                                <LargeIcon><FormatCellIcon /></LargeIcon>
                                <LargeText><div>Format</div><div><Caret /></div></LargeText>
                            </LargeButton>
                        </GroupBody>
                        <GroupLabel>Cells</GroupLabel>
                    </Group>

                    <Group $w={317}>
                        <GroupBody $pad={22}>
                            <SmallColumn $w="136px">
                                <SmallButton $gap={9}><IconSlot><SigmaIcon /></IconSlot>AutoSum<Caret /></SmallButton>
                                <SmallButton $gap={9}><IconSlot><EraserIcon /></IconSlot>Clear<Caret /></SmallButton>
                            </SmallColumn>
                            <LargeButton $w={70} $top={6}>
                                <LargeIcon $h={46}><SortIcon /></LargeIcon>
                                <LargeText $gap={7}><div>Sort &amp;</div><div>Filter<Caret /></div></LargeText>
                            </LargeButton>
                            <LargeButton $w={76} $top={6}>
                                <LargeIcon $h={46}><FindIcon /></LargeIcon>
                                <LargeText $gap={7}><div>Find &amp;</div><div>Select<Caret /></div></LargeText>
                            </LargeButton>
                        </GroupBody>
                        <GroupLabel>Editing</GroupLabel>
                    </Group>

                    <CollapseRibbon size={22} />
                </RibbonBody>
            </Ribbon>

            <FormulaBar>
                <FormulaBox $w={195}>M14<Caret /></FormulaBox>
                <FormulaBox $w={142} $justify="space-around">
                    <X size={26} strokeWidth={1.2} color="#bbb" />
                    <Check size={26} strokeWidth={1.2} color="#bbb" />
                    <FxLabel>fx</FxLabel>
                </FormulaBox>
                <FormulaBox><span /><ChevronDown size={22} /></FormulaBox>
            </FormulaBar>

            <ColumnBar>
                <Corner />
                {AXIS_COLUMNS.map(([name, w]) => (
                    <ColumnCell key={name} $w={w} $on={name === 'M'}>{name}</ColumnCell>
                ))}
            </ColumnBar>

            <SheetArea>
                <RowRail>
                    {rowList.map(r => (
                        <RowCell key={r.n} $h={r.h} $cut={r.cut} $on={r.n === 14}>{r.n}</RowCell>
                    ))}
                </RowRail>
                <Canvas>
                    <Scorecard $x={810} $y={511}>Scorecard</Scorecard>
                    <RoiTable $x={1339} $y={489}>
                        <RoiName>2018 ROI</RoiName>
                        <RoiValue>5%</RoiValue>
                        <RoiBar />
                        <RoiName>2019 ROI</RoiName>
                        <RoiValue>12%</RoiValue>
                        <RoiBar $fill={TEAL}><Triangle /></RoiBar>
                    </RoiTable>
                    <Charts />
                    <ActiveCell $x={2006} $y={776} />
                </Canvas>
                <VScroll><VThumb /></VScroll>
            </SheetArea>

            <HScroll><HThumb /></HScroll>

            <SheetBar>
                <SheetNav $w={50}><ChevronLeft size={24} strokeWidth={1.4} /></SheetNav>
                <SheetNav $w={52}><ChevronRight size={24} strokeWidth={1.4} /></SheetNav>
                <SheetNav $w={52} $color="#444"><Menu size={26} strokeWidth={1.8} /></SheetNav>
                <SheetTab $on>1</SheetTab>
                <SheetTab>2</SheetTab>
                <SheetTab>3</SheetTab>
                <SheetTab>4</SheetTab>
                <ColorTab>Instructions</ColorTab>
                <SheetNav $w={60} $color="#444"><Plus size={26} strokeWidth={1.5} /></SheetNav>
            </SheetBar>

            <StatusBar>
                <StatusItem>Calculation Mode: Automatic</StatusItem>
                <StatusItem $left={28}>Workbook Statistics</StatusItem>
                <StatusItem $auto><Caret size={11} color="#666" /></StatusItem>
                <StatusItem $left={64}>Give Feedback to Microsoft</StatusItem>
                <StatusItem $left={60}><Minus size={24} strokeWidth={1.5} /></StatusItem>
                <StatusItem $left={12}>100%</StatusItem>
                <StatusItem $left={6}><Plus size={28} strokeWidth={1.5} /></StatusItem>
            </StatusBar>

            <Pointer width="28" height="38" viewBox="0 0 28 38">
                <path d="M3 1v28l7-6 5 12 6-2-5-12h9z" fill="#000" stroke="#fff" strokeWidth="2" />
            </Pointer>
        </Page>
    );
}
